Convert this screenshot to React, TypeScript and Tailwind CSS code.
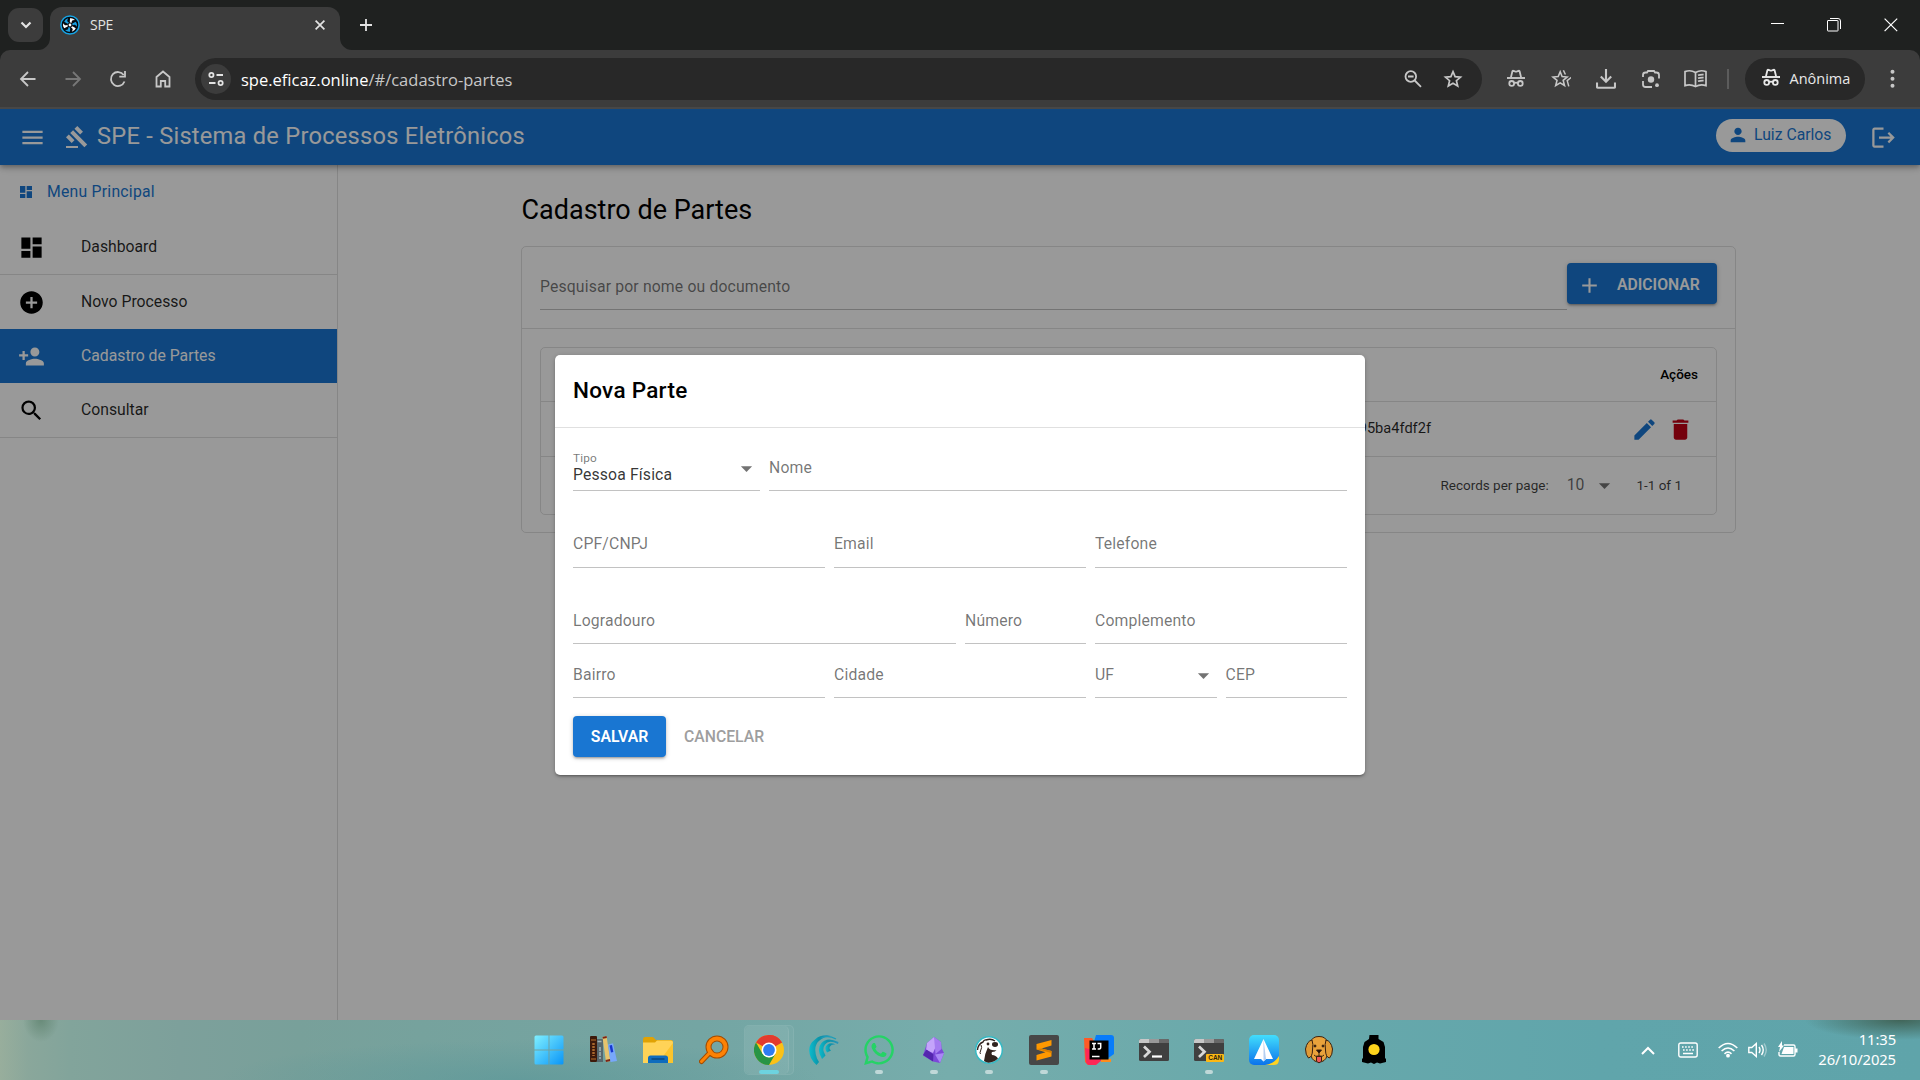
import React from "react";
import {
  MdAdd,
  MdAddCircle,
  MdArrowDropDown,
  MdDashboard,
  MdDelete,
  MdEdit,
  MdGavel,
  MdLogout,
  MdMenu,
  MdPerson,
  MdPersonAdd,
  MdSearch,
} from "react-icons/md";
import { FaWhatsapp } from "react-icons/fa";

/* ---------- browser chrome ---------- */

function Glyph({ children, className = "" }: { children: React.ReactNode; className?: string }) {
  return (
    <svg
      width="20"
      height="20"
      viewBox="0 0 20 20"
      fill="none"
      stroke="currentColor"
      strokeWidth="1.8"
      className={`shrink-0 ${className}`}
    >
      {children}
    </svg>
  );
}

function Incognito({ className = "" }: { className?: string }) {
  return (
    <Glyph className={className}>
      <path d="M1 9h18" strokeWidth="1.9" />
      <path d="M4.900 8.500L6.400 2.300q.2-.8 1-.5l1.600.6q1 .3 2 0l1.600-.6q.8-.3 1 .5l1.500 6.200" strokeWidth="1.800" />
      <circle cx="5.700" cy="14.400" r="2.400" />
      <circle cx="14.300" cy="14.400" r="2.400" />
      <path d="M8 14.200q2-1 4 0" />
    </Glyph>
  );
}

function TabStrip() {
  return (
    <div className="flex h-[50px] items-start bg-[#1f2120] text-[#e3e3e3]">
      <div className="ml-2 mt-2 flex h-[34px] w-[35px] items-center justify-center rounded-[11px] bg-[#3c3c3c]">
        <svg width="12" height="8" viewBox="0 0 12 8" fill="none" stroke="currentColor" strokeWidth="2.200">
          <path d="M1.500 1.500L6 6l4.500-4.500" />
        </svg>
      </div>
      <div className="relative ml-[7px] mt-[7px] flex h-[43px] w-[290px] items-start rounded-t-[12px] bg-[#3c3c3c]">
        <svg className="absolute -left-3 bottom-0" width="12" height="12">
          <path d="M12 0A12 12 0 0 1 0 12H12Z" fill="#3c3c3c" />
        </svg>
        <svg className="absolute -right-3 bottom-0" width="12" height="12">
          <path d="M0 0A12 12 0 0 0 12 12H0Z" fill="#3c3c3c" />
        </svg>
        <svg className="ml-[10px] mt-[8px]" width="20" height="20" viewBox="0 0 20 20">
          <circle cx="10" cy="10" r="9.100" fill="#050a10" stroke="#16a3e4" strokeWidth="1.500" />
          {[0, 60, 120, 180, 240, 300].map((a, i) => (
            <path
              key={a}
              transform={`rotate(${a} 10 10)`}
              d="M9.800 7.300L10 3.300Q12.800 2.800 15 5L12.600 5.300Q11.600 5.800 11.500 8Z"
              fill={i % 2 ? "#1b9fe0" : "#ffffff"}
            />
          ))}
          <circle cx="10" cy="10" r="1.400" fill="#fff" />
        </svg>
        <span className="ml-[10px] mt-[9px] font-['Open_Sans'] text-[14px] leading-[18px] tracking-[-0.300px]">SPE</span>
        <svg className="ml-auto mr-[15px] mt-[13px]" width="10" height="10" viewBox="0 0 10 10" stroke="currentColor" strokeWidth="1.700">
          <path d="M.6.6l8.800 8.800M9.400.6L.6 9.400" />
        </svg>
      </div>
      <svg className="ml-[20px] mt-[19px]" width="12" height="12" viewBox="0 0 12 12" stroke="currentColor" strokeWidth="1.800">
        <path d="M6 0v12M0 6h12" />
      </svg>
      <div className="ml-auto mr-[22px] mt-[18px] flex items-center gap-[43px] text-white">
        <svg width="13" height="14" stroke="currentColor">
          <path d="M0 5.500h13" />
        </svg>
        <svg width="14" height="14" fill="none" stroke="currentColor">
          <path d="M.5 3q0-.5.500-.5h9.500q.5 0 .5.500v9.500q0 .5-.5.500H1q-.5 0-.5-.5z" />
          <path d="M3 .5h8q2.500 0 2.500 2.500v8" />
        </svg>
        <svg width="14" height="14" stroke="currentColor" strokeWidth="1.200">
          <path d="M.6.6l12.600 12.600M13.200.6L.6 13.200" />
        </svg>
      </div>
    </div>
  );
}

function AddressRow() {
  return (
    <div className="bg-[#1f2120]">
      <div className="flex h-[57px] items-center rounded-t-[10px] bg-[#3c3c3c] text-[#c7c7c7]">
        <div className="ml-[17.500px] flex items-center gap-[25px]">
          <Glyph>
            <path d="M17.500 10H3.500M10 3L3 10l7 7" />
          </Glyph>
          <Glyph className="text-[#777777]">
            <path d="M2.500 10h14M10 3l7 7-7 7" />
          </Glyph>
          <Glyph>
            <path d="M16.500 12.500A7 7 0 1 1 15.700 6" />
            <path d="M17 2v5.700h-5.700" />
          </Glyph>
          <Glyph>
            <path d="M3.500 17.500V8L10 2.500 16.500 8v9.500h-4.300v-5.500H7.800v5.500z" />
          </Glyph>
        </div>
        <div className="ml-[22.500px] flex h-[42px] w-[1287px] items-center rounded-full bg-[#282828]">
          <div className="ml-[6px] flex size-[30px] items-center justify-center rounded-full bg-[#3c3c3c] text-[#e3e3e3]">
            <svg width="16" height="14" viewBox="0 0 16 14" fill="none" stroke="currentColor" strokeWidth="1.800">
              <circle cx="3.400" cy="3" r="2.100" />
              <path d="M8.500 3H15M1 11h6.500" />
              <circle cx="12.600" cy="11" r="2.100" />
            </svg>
          </div>
          <span className="ml-[10px] mt-[2px] font-['Open_Sans'] text-[16.500px] leading-5 text-white">
            spe.eficaz.online<span className="text-[#c7c7c7]">/#/cadastro-partes</span>
          </span>
          <div className="ml-auto mr-[19.500px] flex items-center gap-[20px] text-[#c7c7c7]">
            <Glyph>
              <circle cx="7.800" cy="7.500" r="5.300" />
              <path d="M11.700 11.500l6.300 6.300M5 7.500h5.600" />
            </Glyph>
            <Glyph>
              <path strokeWidth="1.700" d="M10 2.600l2.100 5 5.400.5-4.100 3.600 1.300 5.300L10 14.200 5.300 17l1.300-5.300-4.100-3.600 5.400-.5z" />
            </Glyph>
          </div>
        </div>
        <div className="ml-[23.500px] flex items-center gap-[25px] text-[#c7c7c7]">
          <Incognito />
          <Glyph>
            <path strokeWidth="1.600" d="M9.200 2.800l1.900 4.700 5 .5-3.900 3.400 1.300 5.100-4.300-2.600-4.500 2.600 1.300-5.100L2 8l5.200-.5z" />
            <path strokeWidth="1.500" d="M12.400 1.200l2 4.300M20.500 8.200l-4.300 3.400 1.600 5.800" />
          </Glyph>
          <Glyph>
            <path strokeWidth="2.100" d="M10 0v12.500M4.800 7.500L10 12.700l5.200-5.200M1 13.500v4.300q0 1 1 1h16q1 0 1-1v-4.300" />
          </Glyph>
          <Glyph>
            <path d="M2 8V6q0-2.500 2.500-2.500H6L7 2h6l1 1.500h1.500Q18 3.500 18 6v3.500M2 12v3.500Q2 18 4.500 18H11" />
            <circle cx="10" cy="10.500" r="3.200" fill="currentColor" stroke="none" />
            <circle cx="16" cy="16.200" r="1.900" fill="currentColor" stroke="none" />
          </Glyph>
          <svg className="-ml-[1.500px]" width="23" height="20" viewBox="0 0 23 20" fill="none" stroke="currentColor" strokeWidth="1.700">
            <path d="M11.500 3.500Q6.500.5 1 2.600v14Q6.500 14.600 11.500 17.600 16.500 14.600 22 16.600v-14Q16.500.5 11.500 3.500z" />
            <path d="M11.500 3.500v14M14 6.300q2.700-1 5.600-.7M14 9.300q2.700-1 5.600-.7M14 12.300q2.700-1 5.600-.7" />
          </svg>
        </div>
        <div className="ml-[20px] h-5 w-[2px] bg-[#5c5c5c]" />
        <div className="ml-[15.500px] flex h-[42px] w-[120px] items-center rounded-full bg-[#282828] text-[#e8e8e8]">
          <Incognito className="-mt-[1px] ml-[16px]" />
          <span className="ml-[9px] font-['Open_Sans'] text-[14.500px] leading-5">Anônima</span>
        </div>
        <svg className="ml-[25px]" width="5" height="20" viewBox="0 0 5 20" fill="currentColor">
          <circle cx="2.500" cy="2.800" r="2" />
          <circle cx="2.500" cy="9.800" r="2" />
          <circle cx="2.500" cy="16.800" r="2" />
        </svg>
      </div>
      <div className="h-[2px] bg-[#474747]" />
    </div>
  );
}

/* ---------- application ---------- */

function AppHeader() {
  return (
    <header className="relative z-10 flex h-14 shrink-0 items-center bg-[#1976d2] text-white shadow-[0_2px_4px_-1px_rgba(0,0,0,0.2),0_4px_5px_rgba(0,0,0,0.14),0_1px_10px_rgba(0,0,0,0.12)]">
      <MdMenu className="ml-[19px] size-[27px]" />
      <MdGavel className="ml-[19px] size-[24px]" />
      <h1 className="-mt-[3px] ml-[8px] text-[23.625px] leading-8 tracking-[0.260px]">SPE - Sistema de Processos Eletrônicos</h1>
      <div className="-mt-[4px] ml-auto flex h-[33px] w-[130px] items-center rounded-full bg-white pl-[11px] text-[#1976d2]">
        <MdPerson className="size-[22px]" />
        <span className="ml-[5px] text-[15.750px] leading-5">Luiz Carlos</span>
      </div>
      <MdLogout className="ml-[24px] mr-[23px] mt-[1px] size-[27px]" />
    </header>
  );
}

const menu = [
  { label: "Dashboard", icon: MdDashboard, line: true },
  { label: "Novo Processo", icon: MdAddCircle },
  { label: "Cadastro de Partes", icon: MdPersonAdd, active: true },
  { label: "Consultar", icon: MdSearch, line: true },
];

function Sidebar() {
  return (
    <aside className="w-[338px] shrink-0 border-r border-black/[0.12] text-[15.750px]">
      <div className="flex h-[55px] items-center pl-[18px] text-[#1976d2]">
        <MdDashboard className="-mt-[1px] size-[16px]" />
        <span className="-mt-[1px] ml-[13px] tracking-[0.240px]">Menu Principal</span>
      </div>
      <nav>
        {menu.map(({ label, icon: Icon, line, active }) => (
          <div
            key={label}
            className={`flex items-center pl-[18px] ${line ? "h-[55px] border-b border-black/[0.12]" : "h-[54px]"} ${
              active ? "bg-[#1976d2] text-white" : "text-black"
            }`}
          >
            <Icon className="mt-[1px] size-[27px]" />
            <span className={`ml-[36px] ${active ? "" : "text-black/85"}`}>{label}</span>
          </div>
        ))}
      </nav>
    </aside>
  );
}

function PartesPage() {
  return (
    <main className="min-w-0 flex-1">
      <div className="ml-[183px] w-[1215px]">
        <h2 className="mt-[27px] h-[54px] pl-[0.500px] text-[27px] leading-9 text-black">Cadastro de Partes</h2>
        <section className="h-[287px] rounded-[5px] border border-black/[0.12]">
          <div className="flex h-[82px] items-start border-b border-black/[0.12] px-[18px] pt-[16px]">
            <div className="flex h-[47px] flex-1 items-center border-b border-black/[0.24] text-[15.750px] tracking-[0.150px] text-black/55">
              <span className="mt-[2px]">Pesquisar por nome ou documento</span>
            </div>
            <button className="flex h-[41px] w-[150px] items-center rounded-[4px] bg-[#1976d2] text-white shadow-[0_1px_5px_rgba(0,0,0,0.2),0_2px_2px_rgba(0,0,0,0.14),0_3px_1px_-2px_rgba(0,0,0,0.12)]">
              <MdAdd className="ml-[10px] mt-[3px] size-[25px]" />
              <span className="ml-[15px] mt-[3px] text-[15.750px] font-semibold">ADICIONAR</span>
            </button>
          </div>
          <div className="mx-[18px] mt-[18px] h-[168px] rounded-[5px] border border-black/[0.12] text-[14.625px] text-black/85">
            <div className="flex h-[54px] items-center justify-end border-b border-black/[0.12] pr-[18px] text-[13.500px] font-medium text-black">
              Ações
            </div>
            <div className="flex h-[55px] items-center justify-end border-b border-black/[0.12] pr-[22px]">
              <span className="mr-[200px] -mt-[1px]">95ba4fdf2f</span>
              <MdEdit className="size-[27px] text-[#1976d2]" />
              <MdDelete className="ml-[9px] size-[27px] text-[#c10015]" />
            </div>
            <div className="flex h-[57px] items-center justify-end pb-[1px] pr-[34px] text-[13.500px] text-black/75">
              <span>Records per page:</span>
              <span className="ml-[18px] text-[15.750px] text-black/60">10</span>
              <MdArrowDropDown className="ml-[7px] size-[27px] text-black/55" />
              <span className="ml-[18px]">1-1 of 1</span>
            </div>
          </div>
        </section>
      </div>
    </main>
  );
}

function Field({ label, value, select, tall }: { label: string; value?: string; select?: boolean; tall?: boolean }) {
  return (
    <div
      className={`flex items-center border-b border-black/[0.24] text-[15.750px] tracking-[0.150px] text-black/55 ${
        tall ? "h-[46px] pb-[1px]" : "h-[45px]"
      }`}
    >
      {value ? (
        <div className="flex flex-col pt-[1px]">
          <span className="text-[11.800px] leading-[13px]">{label}</span>
          <span className="leading-[19px] text-black/80">{value}</span>
        </div>
      ) : (
        <span>{label}</span>
      )}
      {select && <MdArrowDropDown className="ml-auto mt-[1px] size-[27px] text-black/55" />}
    </div>
  );
}

function NovaParteDialog() {
  return (
    <div className="h-[420px] w-[810px] rounded-[5px] bg-white shadow-[0_1px_5px_rgba(0,0,0,0.2),0_2px_2px_rgba(0,0,0,0.14),0_3px_1px_-2px_rgba(0,0,0,0.12)]">
      <h3 className="h-[73px] border-b border-black/[0.12] px-[18px] pt-[18px] text-[22.500px] font-medium leading-[34px] tracking-[0.280px] text-black">
        Nova Parte
      </h3>
      <div className="flex flex-col px-[18px] pt-[18px]">
        <div className="grid grid-cols-[187px_1fr] gap-x-[9px]">
          <Field label="Tipo" value="Pessoa Física" select />
          <Field label="Nome" />
        </div>
        <div className="mt-[31px] grid grid-cols-3 gap-x-[9px]">
          <Field label="CPF/CNPJ" tall />
          <Field label="Email" tall />
          <Field label="Telefone" tall />
        </div>
        <div className="mt-[31px] grid grid-cols-[383px_121px_1fr] gap-x-[9px]">
          <Field label="Logradouro" />
          <Field label="Número" />
          <Field label="Complemento" />
        </div>
        <div className="mt-[9px] grid grid-cols-[252px_252px_121.500px_1fr] gap-x-[9px]">
          <Field label="Bairro" />
          <Field label="Cidade" />
          <Field label="UF" select />
          <Field label="CEP" />
        </div>
        <div className="mt-[18px] flex">
          <button className="h-[41px] w-[93px] rounded-[4px] bg-[#1976d2] pt-[1px] text-[15.750px] font-semibold text-white shadow-[0_1px_5px_rgba(0,0,0,0.2),0_2px_2px_rgba(0,0,0,0.14),0_3px_1px_-2px_rgba(0,0,0,0.12)]">
            SALVAR
          </button>
          <button className="ml-[18px] h-[41px] pt-[1px] text-[15.750px] font-medium text-[#9e9e9e]">CANCELAR</button>
        </div>
      </div>
    </div>
  );
}

/* ---------- taskbar ---------- */

const icons: { name: string; running?: boolean; focused?: boolean; art: React.ReactNode }[] = [
  {
    name: "start",
    art: (
      <svg width="30" height="30" viewBox="0 0 30 30">
        <defs>
          <linearGradient id="win" x1="0" y1="0" x2="1" y2="1">
            <stop offset="0" stopColor="#7ff0ff" />
            <stop offset="1" stopColor="#0a95f7" />
          </linearGradient>
        </defs>
        <path fill="url(#win)" d="M2 .5h12.500v14H.5V2Q.500.5 2 .5zM15.500.5H28Q29.500.5 29.500 2v12.500h-14zM.5 15.500h14v14H2q-1.500 0-1.500-1.500zM15.500 15.500h14V28q0 1.500-1.500 1.500H15.500z" />
      </svg>
    ),
  },
  {
    name: "library",
    art: (
      <svg width="30" height="30" viewBox="0 0 30 30">
        <rect x="1" y="1" width="7" height="26" rx="1" fill="#3d1a0b" />
        <path d="M2 5h5M2 24h5" stroke="#8f5422" strokeWidth="1.500" />
        <path d="M4.500 8v13" stroke="#a8672c" strokeWidth="2.500" strokeDasharray="2 1" />
        <rect x="8" y="4" width="6" height="23" fill="#55686e" />
        <path d="M8.500 6.500h5M11 12v12" stroke="#a3b4b6" strokeWidth="1.500" strokeDasharray="4 1" />
        <path d="M13.500 2l4-1 4 25-4.500 1z" fill="#e6c46d" />
        <path d="M13.500 2l4-1 .4 2-4 .8zM16.500 25l4.500-1 .5 2-4.500 1z" fill="#7a2418" />
        <path d="M19 9.500l5-1.200L28 26l-6.500 1z" fill="#78a8fb" />
        <path d="M20.500 10.500l2.500-.5 1.300 7-2.300.5z" fill="#1737ce" />
      </svg>
    ),
  },
  {
    name: "files",
    art: (
      <svg className="-translate-x-[1px]" width="30" height="30" viewBox="0 0 30 30">
        <path d="M0 5q0-3 2-3h8l3 3h15q2 0 2 2v5H0z" fill="#e0a204" />
        <path d="M0 7.500h12L14 5.500h14q2 0 2 2V28H0z" fill="#ffd357" />
        <path d="M30 8v20H15z" fill="#fbc42d" />
        <path d="M5 28v-5q0-2.500 2.500-2.500h15q2.500 0 2.500 2.500v5z" fill="#0f6cbd" />
        <path d="M8.500 24h13" stroke="#08467e" strokeWidth="1.500" />
      </svg>
    ),
  },
  {
    name: "finder",
    art: (
      <svg width="30" height="30" viewBox="0 0 30 30" fill="none">
        <path d="M2.500 26.500L12 16.500" stroke="#a34c00" strokeWidth="5" strokeLinecap="round" />
        <circle cx="18" cy="12" r="8.500" stroke="#a34c00" strokeWidth="6" />
        <path d="M2.500 26.500L12 16.500" stroke="#fd8204" strokeWidth="3" strokeLinecap="round" />
        <circle cx="18" cy="12" r="8.500" stroke="#fd8204" strokeWidth="4" />
      </svg>
    ),
  },
  {
    name: "chrome",
    running: true,
    focused: true,
    art: (
      <svg width="30" height="30" viewBox="0 0 30 30">
        <circle cx="15" cy="15" r="15" fill="#fbc116" />
        <path d="M15 15L2 7.500A15 15 0 0 1 28 7.500z" fill="#e33b2e" />
        <path d="M15 7.500h13A15 15 0 0 0 15 0z" fill="#e33b2e" />
        <path d="M2 7.500L8.500 18.800 15 22.500 21.500 18.700 15 30A15 15 0 0 1 2 7.500z" fill="#279445" />
        <circle cx="15" cy="15" r="7.500" fill="#fff" />
        <circle cx="15" cy="15" r="5.900" fill="#2e7cf2" />
      </svg>
    ),
  },
  {
    name: "wing",
    art: (
      <svg width="30" height="30" viewBox="0 0 30 30">
        <defs>
          <linearGradient id="wing" x1="0" y1="0" x2="1" y2="0">
            <stop offset="0" stopColor="#0cbccd" />
            <stop offset=".45" stopColor="#0a93a8" />
            <stop offset="1" stopColor="#2a93b8" />
          </linearGradient>
        </defs>
        <path fill="url(#wing)" d="M2 23Q-3 11 6 4.500 12-1 22 .8 16 1 10.500 5.500 3.500 11 8 23.500L10 27 7.500 30Q4 27 2 23z" />
        <path fill="url(#wing)" d="M13 24Q7 14 12.500 8 18 1.500 29.500 7L29 9Q19.500 4.500 16 9.500 12.500 14 16.500 20.500z" />
        <path fill="url(#wing)" d="M18 17.500Q14.500 12.500 18.500 9.500 22 7 26.500 9.500 22.500 9 21 11.500q-1.500 2 1 4z" />
        <path d="M12.500 3Q19-.5 27 4" fill="none" stroke="#1c9db8" strokeWidth="1.400" />
      </svg>
    ),
  },
  { name: "whatsapp", running: true, art: <FaWhatsapp className="size-[34px] text-[#25d366]" /> },
  {
    name: "obsidian",
    running: true,
    art: (
      <svg className="-translate-x-[1px]" width="30" height="30" viewBox="0 0 30 30">
        <path d="M16 2l7 5 .5 6 2.500 5-4 10-7-1.500-10-6L9 8z" fill="#7c49d8" />
        <path d="M16 2L9 8l-1 7 7 3 4-9z" fill="#c4a4fb" />
        <path d="M16 2l7 5 .5 7-6 5z" fill="#a57cf0" />
        <path d="M5 20l3.500-5.500 7 5-.5 7z" fill="#5426ae" />
        <path d="M26 18l-9 1.500 5 8.500z" fill="#a987f5" />
      </svg>
    ),
  },
  {
    name: "dbeaver",
    running: true,
    art: (
      <svg width="30" height="30" viewBox="0 0 30 30">
        <circle cx="15" cy="15" r="13.300" fill="#fff" stroke="#35b9c4" strokeWidth="1.500" />
        <path d="M3.500 15Q4 9 9 7q1-2.500 3-2 5-2 9 1" fill="none" stroke="#31231f" strokeWidth="1.400" />
        <ellipse cx="21" cy="9.500" rx="3" ry="2.400" fill="#31231f" />
        <circle cx="14" cy="9" r="1.400" fill="#31231f" />
        <path d="M7 10q1.500 2-.5 6-1 2 0 3" fill="none" stroke="#31231f" strokeWidth="1" />
        <path d="M14 12q2 4 8.500 3-1 2-4.500 2-1 1 0 3 4 0 6 3.500Q20 27.500 14.500 27.700q-3-.3-4.500-1.700Q11 18 14 12z" fill="#31231f" />
      </svg>
    ),
  },
  {
    name: "sublime",
    running: true,
    art: (
      <svg width="30" height="30" viewBox="0 0 30 30">
        <rect width="30" height="30" rx="2" fill="#474747" />
        <path d="M22.500 5v5.500L12.500 13.500l10 2.500v5.500L7.500 25.500V20l9-2.800L7.500 14.500V9z" fill="#ff9800" />
        <path d="M12.500 13.500l10 2.500v2L7.500 14z" fill="#d77d00" />
      </svg>
    ),
  },
  {
    name: "intellij",
    art: (
      <svg width="30" height="30" viewBox="0 0 30 30">
        <path d="M0 3h8l6 10-3 17H4l-3-3z" fill="#ff5a26" />
        <path d="M1 13l12 3 5 9-6 5H6q-4 0-4-4z" fill="#fe2857" />
        <path d="M12 0h15q3 0 3 3v16l-7 5-13-17z" fill="#087cfa" />
        <path d="M17 24h10v3H17z" fill="#ff8c1c" />
        <rect x="5.500" y="5.500" width="19" height="19" fill="#000" />
        <path d="M8 8.500h4M10 8.500v5.500M8 14h4M13.500 8.500h3.200v4q0 1.700-3 1.500M8 21.500h7.500" stroke="#fff" strokeWidth="1.500" fill="none" />
      </svg>
    ),
  },
  { name: "terminal", art: <TerminalArt /> },
  {
    name: "terminal-canary",
    running: true,
    art: (
      <div className="relative">
        <TerminalArt />
        <span className="absolute bottom-[3px] right-0 flex h-[8px] w-[18px] items-center justify-center rounded-[1px] bg-[#fdb813] font-['Liberation_Sans'] text-[6.500px] font-bold leading-none text-[#2c2410]">
          CAN
        </span>
      </div>
    ),
  },
  {
    name: "spark",
    art: (
      <svg width="30" height="30" viewBox="0 0 30 30">
        <defs>
          <linearGradient id="spark" x1="0" y1="0" x2="0" y2="1">
            <stop offset="0" stopColor="#42defc" />
            <stop offset="1" stopColor="#0b73ec" />
          </linearGradient>
        </defs>
        <rect width="30" height="30" rx="5" fill="url(#spark)" />
        <path d="M30 21v4q0 5-5 5h-9q9-1 14-9z" fill="#ffd322" />
        <path d="M14.500 4L24 24l-7 0-2.500 2.500L12 24H5z" fill="#fff" />
        <path d="M14.500 4L17 24l-2.500 2.500z" fill="#b5cff1" />
      </svg>
    ),
  },
  {
    name: "dog",
    art: (
      <svg width="30" height="30" viewBox="0 0 30 30" stroke="#3a2110" strokeWidth="1">
        <path d="M7 7Q8 1.500 15 1.500T23 7q1 8 0 14-2 6-8 6T7 21Q6 15 7 7z" fill="#e9a23b" />
        <path d="M8 5Q3 6 1.500 14q0 6 3 9 4-1 4-8 1-6-.5-10zM22 5q5 1 6.500 9 0 6-3 9-4-1-4-8-1-6 .5-10z" fill="#e09a35" />
        <path d="M12.500 21.500h5V26q-2.500 3.500-5 0z" fill="#ee5757" />
        <path d="M15 17v4q-4 1-5-1M15 21q4 1 5-1" fill="none" />
        <path d="M12.500 15h5l-2.500 3z" fill="#17100b" />
        <circle cx="11" cy="11" r="1" fill="#111" />
        <circle cx="19" cy="11" r="1" fill="#111" />
      </svg>
    ),
  },
  {
    name: "locomotive",
    art: (
      <svg width="30" height="30" viewBox="0 0 30 30">
        <path d="M10.500 0h9v4l5 3 1.500 5v11l1 1v3l-6 1.500-3-1-3 1.500-3-1.500-3 1-6-1.500v-3l1-1V12l1.500-5 4.500-3z" fill="#000" />
        <circle cx="15" cy="14.500" r="5.600" fill="#ffd31c" />
      </svg>
    ),
  },
];

function TerminalArt() {
  return (
    <svg width="30" height="30" viewBox="0 0 30 30">
      <rect y="4" width="30" height="22" rx="1.500" fill="#404040" />
      <path d="M0 8V5.500Q0 4 1.500 4H10v4z" fill="#c8c8c8" />
      <path d="M10 4h10v4H10z" fill="#999" />
      <path d="M20 4h8.500Q30 4 30 5.500V8H20z" fill="#686868" />
      <path d="M5 11.500l5.500 5.200L5 22" fill="none" stroke="#d9d9d9" strokeWidth="2.700" />
      <path d="M13 21.500h10" stroke="#fff" strokeWidth="2.200" />
    </svg>
  );
}

function Taskbar() {
  return (
    <footer className="flex h-[60px] bg-[radial-gradient(ellipse_95px_20px_at_1900px_0px,rgba(55,80,62,0.75),transparent),radial-gradient(ellipse_18px_22px_at_41px_0px,rgba(75,113,88,0.5),transparent),radial-gradient(ellipse_300px_40px_at_520px_60px,rgba(88,150,152,0.6),transparent),linear-gradient(90deg,#98ae9c_0px,#8aa79b_28px,#82a49b_70px,#7da09b_180px,#78a09a_300px,#76a29d_420px,#74a5a3_700px,#76adac_950px,#69a9ab_1250px,#60a5ab_1600px,#5fa4aa_1920px)]">
      <div className="ml-[521px] flex">
        {icons.map((it) => (
          <div key={it.name} className="flex w-[55.070px] items-center justify-center">
            <div
              className={`relative flex h-[50px] w-[50px] items-center justify-center rounded-[5px] ${
                it.focused ? "border border-white/[0.07] bg-white/[0.04]" : ""
              }`}
            >
              {it.focused && <span className="absolute inset-y-0 left-0 w-[44px] rounded-[5px] border-r border-white/[0.08] bg-white/[0.05]" />}
              <div className="relative">{it.art}</div>
              {it.running && (
                <span
                  className={`absolute h-[4px] rounded-full ${it.focused ? "bottom-0 w-5 bg-[#6dd3df]" : "bottom-[1px] w-2 bg-[#bfd8d8]"}`}
                />
              )}
            </div>
          </div>
        ))}
      </div>
      <div className="ml-auto mr-[24px] flex items-center text-white">
        <svg width="14" height="9" viewBox="0 0 14 9" fill="none" stroke="currentColor" strokeWidth="2">
          <path d="M1 8l6-6 6 6" />
        </svg>
        <svg className="ml-[23px]" width="20" height="16" viewBox="0 0 20 16" fill="none" stroke="currentColor" strokeWidth="1.400">
          <rect x=".8" y="1" width="18.400" height="14" rx="2" />
          <path d="M4 5h12.500M5 8h11" strokeWidth="1.600" strokeDasharray="1.600 1.500" />
          <path d="M5 11.500h10" strokeWidth="1.500" />
        </svg>
        <svg className="ml-[20px]" width="20" height="16" viewBox="0 0 20 16" fill="none" stroke="currentColor" strokeWidth="1.600">
          <path d="M.7 6Q10-3 19.300 6M3.600 9q6.400-6 12.800 0M6.500 11.800q3.500-3.200 7 0" />
          <circle cx="10" cy="13.700" r="1.900" fill="currentColor" stroke="none" />
        </svg>
        <svg className="ml-[10px]" width="20" height="16" viewBox="0 0 20 16" fill="none" stroke="currentColor" strokeWidth="1.400">
          <path d="M.8 5.500h3L8.300 1.500v13L3.800 10.500h-3zM11 5q2 3 0 6M13.500 3q3.500 5 0 10" />
          <path d="M16 1.500q4.500 6.500 0 13" opacity=".4" />
        </svg>
        <svg className="-mt-[2px] ml-[9px]" width="21" height="17" viewBox="0 0 21 17" fill="none" stroke="currentColor" strokeWidth="1.400">
          <path d="M7 4h9.500Q18 4 18 5.500v8q0 1.500-1.500 1.500h-13Q2 15 2 13.500V11" />
          <path d="M7 6h9.500v7H4.500zM18 7.500h2.500v4H18zM5 0L1 6h2l-1 5 5-6.500H5z" fill="currentColor" stroke="none" />
        </svg>
        <div className="-mt-[3px] ml-[18px] w-[80px] text-right font-['Noto_Sans'] text-[14.800px] leading-5 tracking-[-0.100px]">
          <div>11:35</div>
          <div>26/10/2025</div>
        </div>
      </div>
    </footer>
  );
}

export default function App() {
  return (
    <div className="flex h-[1080px] w-[1920px] flex-col overflow-hidden">
      <TabStrip />
      <AddressRow />
      <div className="relative flex h-[911px] flex-col overflow-hidden bg-white font-['Roboto']">
        <AppHeader />
        <div className="flex min-h-0 flex-1">
          <Sidebar />
          <PartesPage />
        </div>
        <div className="absolute inset-0 z-20 flex items-center justify-center bg-black/40">
          <NovaParteDialog />
        </div>
      </div>
      <Taskbar />
    </div>
  );
}
